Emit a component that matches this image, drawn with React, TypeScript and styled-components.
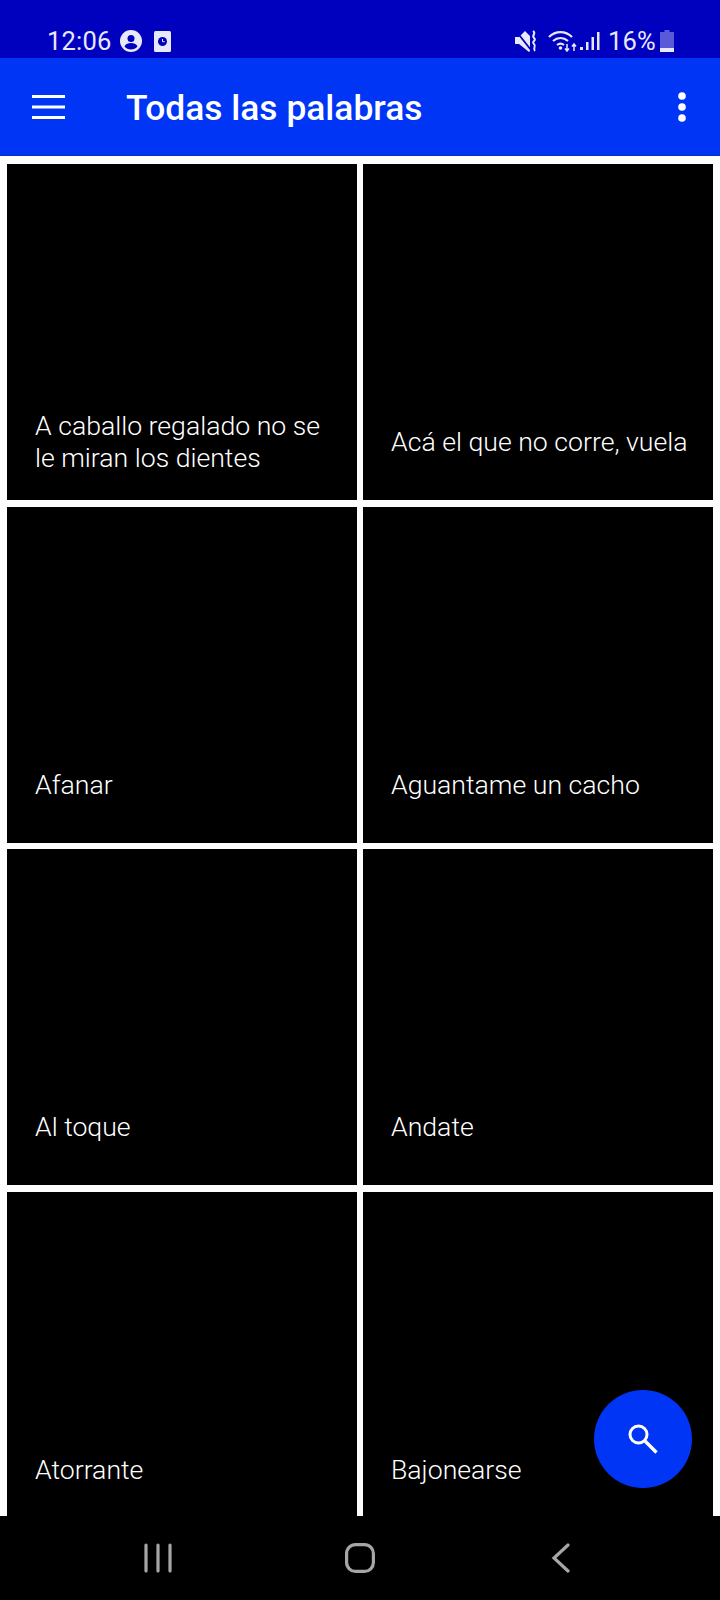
import { createGlobalStyle } from 'styled-components';
import styled from 'styled-components';

const GlobalStyle = createGlobalStyle`
  html, body {
    margin: 0;
    padding: 0;
    background: #fff;
    font-family: Roboto, "Liberation Sans", sans-serif;
  }
`;

const Phone = styled.div`
  position: relative;
  display: flex;
  flex-direction: column;
  width: 720px;
  height: 1600px;
  overflow: hidden;
  background: #fdfdfd;
`;

const StatusBar = styled.div`
  display: flex;
  align-items: flex-end;
  justify-content: space-between;
  flex: 0 0 58px;
  box-sizing: border-box;
  padding: 0 45px 1px 47px;
  background: #0000bf;
  color: #e8e8fb;
`;

const StatusGroup = styled.div`
  display: flex;
  align-items: center;
  gap: ${(p: { $gap: number }) => p.$gap}px;
  height: 32px;
`;

const StatusText = styled.span`
  font-size: 25.5px;
  letter-spacing: 0.2px;
`;

const Percent = styled(StatusText)`
  margin: 0 2px 0 6px;
`;

const AppBar = styled.header`
  display: flex;
  align-items: center;
  flex: 0 0 98px;
  box-sizing: border-box;
  padding: 0 32px 0 32px;
  background: #0035f6;
  border-bottom: 1px solid #0a2fc8;
  color: #fff;
`;

const Title = styled.h1`
  flex: 1;
  margin: 3px 0 0 60px;
  font-size: 35.4px;
  font-weight: 500;
`;

const Grid = styled.main`
  display: grid;
  grid-template-columns: 350px 350px;
  grid-auto-rows: 336px;
  gap: 6.5px 6px;
  flex: 1;
  min-height: 0;
  overflow: hidden;
  padding: 8px 7px 0;
`;

const Tile = styled.article`
  display: flex;
  align-items: flex-end;
  box-sizing: border-box;
  padding: 0 20px 26px 28px;
  background: #000;
`;

const TileLabel = styled.div`
  display: flex;
  align-items: center;
  min-height: 64px;
  color: #fff;
  font-size: 26.65px;
  font-weight: 300;
  line-height: 32px;
`;

const NavBar = styled.nav`
  display: flex;
  align-items: center;
  justify-content: space-between;
  flex: 0 0 84px;
  box-sizing: border-box;
  padding: 0 149px 0 144px;
  background: #000;
`;

const Fab = styled.button`
  position: absolute;
  right: 28px;
  bottom: 112px;
  display: flex;
  align-items: center;
  justify-content: center;
  width: 98px;
  height: 98px;
  padding: 0;
  border: 0;
  border-radius: 50%;
  background: #0035f6;
`;

const words = [
  'A caballo regalado no se le miran los dientes',
  'Acá el que no corre, vuela',
  'Afanar',
  'Aguantame un cacho',
  'Al toque',
  'Andate',
  'Atorrante',
  'Bajonearse',
];

export default function App() {
  return (
    <>
      <GlobalStyle />
      <Phone>
        <StatusBar>
          <StatusGroup $gap={8}>
            <StatusText>12:06</StatusText>
            <svg width="22" height="22" viewBox="0 0 22 22">
              <circle cx="11" cy="11" r="11" fill="#e8e8fb" />
              <circle cx="11" cy="8.500" r="3.500" fill="#0000bf" />
              <path d="M4.500 16.500c1.200-2.600 3.600-3.500 6.500-3.500s5.300.9 6.500 3.500c-1.500 1.800-3.900 3-6.500 3s-5-1.200-6.500-3z" fill="#0000bf" />
            </svg>
            <svg width="21" height="21" viewBox="-4 0 21 21">
              <rect width="17" height="21" rx="1.500" fill="#e8e8fb" />
              <circle cx="8.500" cy="10.500" r="4.500" fill="#0000bf" />
              <path d="M8.500 8v2.700h2.200" stroke="#e8e8fb" strokeWidth="1" fill="none" />
            </svg>
          </StatusGroup>
          <StatusGroup $gap={2}>
            <svg width="23" height="22" viewBox="0 0 23 22">
              <path d="M0 7h4l6-6 5 5v15l-1 1-10-8H0z" fill="#e8e8fb" />
              <path d="M1 1l15 19" stroke="#0000bf" strokeWidth="1.800" />
              <path d="M18 1c4 3-2 4 1 7s-3 3 0 6-2 4 1 7" stroke="#e8e8fb" strokeWidth="2" fill="none" />
            </svg>
            <svg width="38" height="22" viewBox="-8 0 38 22">
              <path d="M1 7c6.500-6.500 16.500-6.500 23 0M5 11c4.500-4 10.500-4 15 0M9 15c2.500-2 4.500-2 7 0" stroke="#e8e8fb" strokeWidth="2.200" fill="none" />
              <circle cx="12.500" cy="18" r="1.800" fill="#e8e8fb" />
              <path d="M19 14v7m-2-2.500l2 2.500 2-2.500M26 21v-7m-2 2.500l2-2.500 2 2.500" stroke="#e8e8fb" strokeWidth="1.500" fill="none" />
            </svg>
            <svg width="20" height="20" viewBox="0 0 20 20">
              <g fill="#e8e8fb">
                <rect x="0" y="16" width="3" height="3" />
                <rect x="6" y="11" width="2.500" height="8" />
                <rect x="11.500" y="6" width="2.500" height="13" />
                <rect x="17" y="1" width="2.500" height="18" />
              </g>
            </svg>
            <Percent>16%</Percent>
            <svg width="15" height="22" viewBox="0 0 15 22">
              <path d="M4.500 0h5v2h4.500v20H0V2h4.500z" fill="#5a5ad8" />
              <rect y="18" width="14" height="4" fill="#e8e8fb" />
            </svg>
          </StatusGroup>
        </StatusBar>
        <AppBar>
          <svg width="34" height="24" viewBox="0 0 34 24" fill="#fff">
            <rect y="0" width="33" height="3" />
            <rect y="10.500" width="33" height="3" />
            <rect y="21" width="33" height="3" />
          </svg>
          <Title>Todas las palabras</Title>
          <svg width="12" height="32" viewBox="0 0 12 32" fill="#fff">
            <circle cx="6" cy="5" r="3.800" />
            <circle cx="6" cy="16" r="3.800" />
            <circle cx="6" cy="27" r="3.800" />
          </svg>
        </AppBar>
        <Grid>
          {words.map((word) => (
            <Tile key={word}>
              <TileLabel>{word}</TileLabel>
            </Tile>
          ))}
        </Grid>
        <NavBar>
          <svg width="28" height="30" viewBox="0 0 28 30">
            <path d="M2 2v26M14 2v26M26 2v26" stroke="#a6a6a6" strokeWidth="3.200" strokeLinecap="round" />
          </svg>
          <svg width="30" height="30" viewBox="0 0 30 30">
            <rect x="1.600" y="1.600" width="26.800" height="26.800" rx="9" fill="none" stroke="#a6a6a6" strokeWidth="3.200" />
          </svg>
          <svg width="24" height="30" viewBox="-4 0 24 30">
            <path d="M17 2L3 15l14 13" fill="none" stroke="#a6a6a6" strokeWidth="3.200" strokeLinecap="round" />
          </svg>
        </NavBar>
        <Fab aria-label="Buscar">
          <svg width="30" height="30" viewBox="0 0 30 30">
            <circle cx="10.500" cy="10.500" r="8.500" fill="none" stroke="#fff" strokeWidth="3" />
            <path d="M17 17L28.500 28.500" stroke="#fff" strokeWidth="3.400" />
          </svg>
        </Fab>
      </Phone>
    </>
  );
}
